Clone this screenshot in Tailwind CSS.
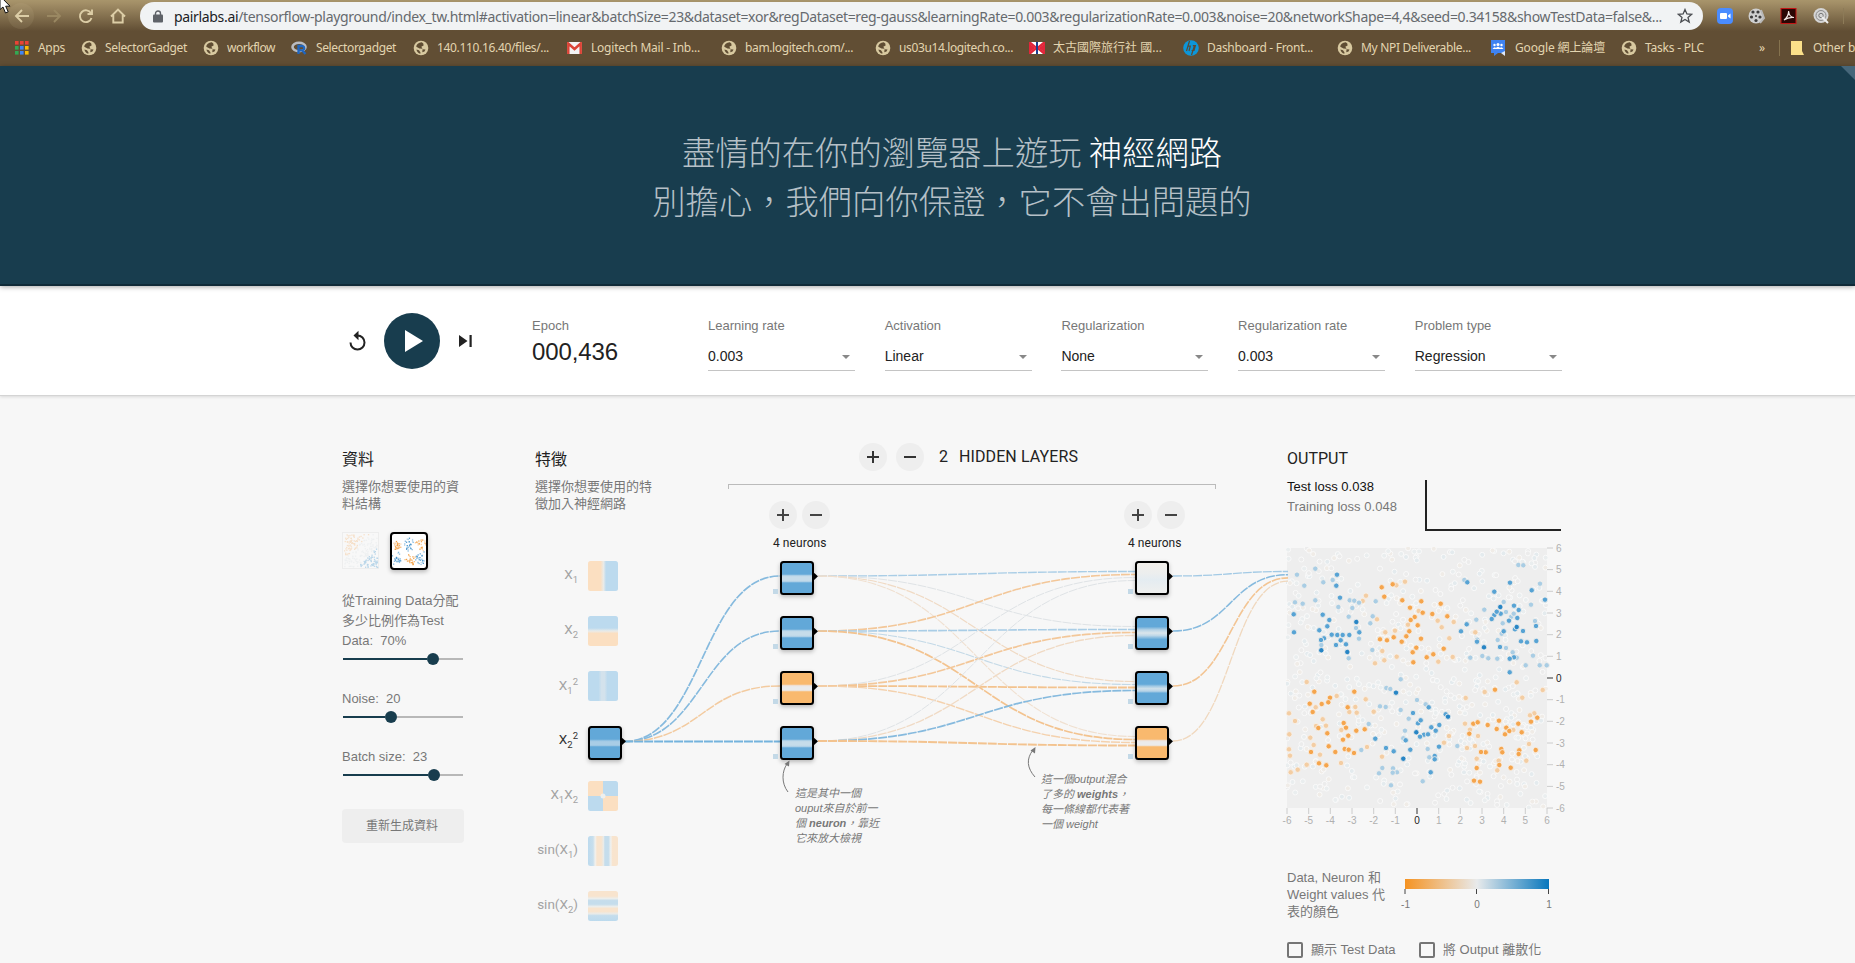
<!DOCTYPE html>
<html lang="zh-Hant">
<head>
<meta charset="utf-8">
<title>Neural network playground</title>
<script src="https://cdn.jsdelivr.net/npm/@tailwindcss/browser@4"></script>
</head>
<body class="w-[1855px] h-[963px] overflow-hidden bg-[#f7f7f7] font-['Liberation_Sans','Noto_Sans_CJK_TC',sans-serif] text-[13px] text-[#777]">

<svg class="hidden">
  <symbol id="globe" viewBox="0 0 16 16"><circle cx="8" cy="8" r="7.3" fill="#d8c9a0"/><path d="M8.8 2.2C5.5 2.300 3.200 4.500 3.300 6.700L6.500 8.600L9.500 8.800L8.300 6.800L10.600 5.400L10.300 3.500ZM3.400 9.500L6 10.300L7.500 12.500L7.300 13.800C5.300 13.300 3.800 11.800 3.400 9.500ZM9.500 9.300L12.500 9.500L11.500 11.500L9.300 12.200Z" fill="#5f4d33"/></symbol>
</svg>

<!-- Browser toolbar -->
<div class="h-[66px] bg-[linear-gradient(#a8956b_0px,#a38f67_3px,#614e34_31px,#614e34_100%)] relative font-['Noto_Sans','Noto_Sans_CJK_TC',sans-serif]">
  <div class="h-8 flex items-center">
    <svg class="w-[140px] h-8 shrink-0" viewBox="0 0 140 32" fill="none" stroke="#dccda6" stroke-width="1.900">
      <circle cx="21" cy="16" r="13" fill="#cbbb93" fill-opacity=".13" stroke="none"/>
      <path d="M29 16H16.500M22 10L16 16L22 22"/>
      <path d="M47 16H59.500M54 10L60 16L54 22" stroke="#9a8862"/>
      <path d="M91 13.300A5.900 5.900 0 1 0 91.500 18M92 9.500V14H87.500"/>
      <path d="M111 16.500L118 9.500L125 16.500M113.300 15V22.500H122.700V15"/>
      <path d="M0 -4V9.500L3 7L5.500 13L8.200 11.800L5.700 6.200H10L0 -4Z" fill="#fff" stroke="#111" stroke-width="1"/>
    </svg>
    <div class="w-[1563px] h-7 rounded-full bg-[#f1f3f4] flex items-center shrink-0">
      <svg class="ml-[13px] mr-[11px] w-[10px] h-[13px]" viewBox="0 0 10 13"><rect x="0" y="4.500" width="10" height="8" rx="1" fill="#5f6368"/><path d="M2.500 5V3.500a2.500 2.500 0 0 1 5 0V5" fill="none" stroke="#5f6368" stroke-width="1.400"/></svg>
      <span data-w="1488" class="text-[14px] whitespace-nowrap text-[#666a6e]"><span class="text-[#202124]">pairlabs.ai</span>/tensorflow-playground/index_tw.html#activation=linear&amp;batchSize=23&amp;dataset=xor&amp;regDataset=reg-gauss&amp;learningRate=0.003&amp;regularizationRate=0.003&amp;noise=20&amp;networkShape=4,4&amp;seed=0.34158&amp;showTestData=false&amp;...</span>
      <svg class="ml-auto mr-[10px] w-4 h-4" viewBox="0 0 16 16" fill="none" stroke="#4a4d51" stroke-width="1.300"><path d="M8 1.500L9.900 6L14.700 6.300L11 9.400L12.200 14.100L8 11.500L3.800 14.100L5 9.400L1.300 6.300L6.100 6Z"/></svg>
    </div>
    <svg class="w-[152px] h-8 shrink-0" viewBox="1703 0 152 32">
      <rect x="1717" y="8" width="16" height="16" rx="4" fill="#4a8cff"/><rect x="1720" y="13" width="7" height="6" rx="1" fill="#fff"/><path d="M1728 15.500L1730.500 13.500V18.500L1728 16.500Z" fill="#fff"/>
      <circle cx="1756" cy="16" r="7.500" fill="#cfcfcf"/><path d="M1761 10L1764 18L1760 23" stroke="#b8b8b8" stroke-width="2" fill="none"/><g fill="#3d3d3d"><circle cx="1753" cy="12" r="1.600"/><circle cx="1758" cy="12" r="1.600"/><circle cx="1751.500" cy="17" r="1.600"/><circle cx="1756" cy="20.500" r="1.600"/><circle cx="1760" cy="17" r="1.600"/><circle cx="1756" cy="16" r="1.100"/></g>
      <rect x="1781" y="8.500" width="15" height="15" fill="#2a0604" stroke="#c11414"/><path d="M1784 20C1787 18 1789 14 1788.500 11C1789 15 1791 17.500 1794 17.500C1790 17 1787 18 1784 20" fill="none" stroke="#f2e6e4" stroke-width="1.200"/>
      <circle cx="1821" cy="15.500" r="7.500" fill="#d5d5d5"/><circle cx="1821" cy="15.500" r="5" fill="none" stroke="#8a8a8a"/><circle cx="1821" cy="15.500" r="2.200" fill="none" stroke="#777"/><path d="M1822 17L1828 23" stroke="#eee" stroke-width="2"/>
      <path d="M1843.500 8V24" stroke="#8d7b58"/>
    </svg>
  </div>
  <div id="bookmarks" class="h-[32px] relative flex items-center text-[12px] text-[#e3d5b0] whitespace-nowrap"></div>
</div>

<!-- Page header -->
<header class="relative z-10 h-[220px] bg-[#183d4e] border-b-2 border-[#102b38] shadow-[0_1px_5px_rgba(0,0,0,.35)] flex flex-col pt-[60px] pl-[49px]">
  <h1 class="text-center font-light text-[33.300px] leading-[49px] text-[#b5c0c7] font-['Noto_Sans_CJK_TC',sans-serif]">盡情的在你的瀏覽器上遊玩 <span class="text-white">神經網路</span><br>別擔心，我們向你保證，它不會出問題的</h1>
  <svg class="absolute right-0 top-0 w-[14px] h-[14px]" viewBox="0 0 14 14"><path d="M0 0H14V14Z" fill="#46677a"/></svg>
</header>

<!-- Training controls -->
<section class="h-[110px] bg-white border-b border-[#d4d4d4] shadow-[0_1px_3px_rgba(0,0,0,.12)] flex">
  <div class="pl-[349px] w-[532px] flex items-center shrink-0">
    <svg class="w-[17px] h-[22px]" viewBox="0 0 17 22" fill="none" stroke="#222" stroke-width="2"><path d="M8.500 5.500A7 7 0 1 1 1.500 12.500"/><path d="M9.500 0.800V10.200L4.500 5.500Z" fill="#222" stroke="none"/></svg>
    <div class="ml-[18px] w-14 h-14 rounded-full bg-[#183d4e] flex items-center justify-center"><svg class="w-[18px] h-[22px] ml-1" viewBox="0 0 18 22"><path d="M0 0L18 11L0 22Z" fill="#fff"/></svg></div>
    <svg class="ml-[19px] w-[13px] h-3" viewBox="0 0 13 12" fill="#222"><path d="M0 0L8.500 6L0 12ZM10.500 0H12.700V12H10.500Z"/></svg>
  </div>
  <div class="w-[176px] shrink-0 pt-[32px]"><div class="leading-4">Epoch</div><div class="mt-[2px] text-[24px] leading-8 text-[#222] whitespace-nowrap"><span data-w="86">000,436</span></div></div>
  <div id="selects" class="flex gap-[29.700px] pt-[32px]"></div>
</section>

<!-- Playground -->
<main class="relative h-[567px] flex">
  <div class="ml-[342px] w-[193px] shrink-0 pt-[52px]">
    <h2 class="text-[16px] leading-6 text-[#222]">資料</h2>
    <p class="w-[120px] mt-[6px] leading-[17px]">選擇你想要使用的資料結構</p>
    <div class="flex mt-[20px] h-[38px] gap-[11px]">
      <svg id="thumbA" class="w-[37px] h-[37px] opacity-35" viewBox="0 0 37 37"></svg>
      <svg id="thumbB" class="w-[38px] h-[38px] rounded bg-white border-2 border-black shadow-[0_2px_4px_rgba(0,0,0,.25)]" viewBox="0 0 34 34"></svg>
    </div>
    <p class="w-[122px] mt-[21px] leading-5 whitespace-nowrap">從Training Data分配<br>多少比例作為Test<br>Data:&nbsp; 70%</p>
    <div class="ml-px w-[120px] h-3 mt-[2px] flex items-center"><div class="w-[84px] h-[2px] bg-[#183d4e]"></div><div class="size-3 rounded-full bg-[#183d4e]"></div><div class="flex-1 h-[2px] bg-[#b8b8b8]"></div></div>
    <p class="mt-[24px] leading-5">Noise:&nbsp; 20</p>
    <div class="ml-px w-[120px] h-3 mt-[2px] flex items-center"><div class="w-[42px] h-[2px] bg-[#183d4e]"></div><div class="size-3 rounded-full bg-[#183d4e]"></div><div class="flex-1 h-[2px] bg-[#b8b8b8]"></div></div>
    <p class="mt-[24px] leading-5">Batch size:&nbsp; 23</p>
    <div class="ml-px w-[120px] h-3 mt-[2px] flex items-center"><div class="w-[85px] h-[2px] bg-[#183d4e]"></div><div class="size-3 rounded-full bg-[#183d4e]"></div><div class="flex-1 h-[2px] bg-[#b8b8b8]"></div></div>
    <div class="mt-[28px] w-[122px] h-[34px] rounded-sm bg-[#eee] text-[12px] flex items-center justify-center pr-0.5">重新生成資料</div>
  </div>
  <div class="w-[193px] shrink-0 pt-[52px]">
    <h2 class="text-[16px] leading-6 text-[#222]">特徵</h2>
    <p class="w-[120px] mt-[6px] leading-[17px]">選擇你想要使用的特徵加入神經網路</p>
  </div>
  <div class="w-[559px] shrink-0 pt-[47px] font-['Roboto','Noto_Sans_CJK_TC',sans-serif] text-[#222]">
    <div class="flex items-center pl-[131px] h-7">
      <svg class="w-[65px] h-7" viewBox="0 0 65 28"><circle cx="14" cy="14" r="14" fill="#eee"/><circle cx="51" cy="14" r="14" fill="#eee"/><path d="M8 14H20M14 8V20M45 14H57" stroke="#333" stroke-width="2"/></svg>
      <span class="ml-[15px] text-[16px]">2</span><span data-w="119" class="ml-[11px] text-[16px] whitespace-nowrap">HIDDEN LAYERS</span>
    </div>
    <div class="w-[488px] h-[5px] mt-[13px] border border-b-0 border-[#bbb]"></div>
    <div class="flex pl-[41px] mt-[12px] gap-[292px]">
      <div class="w-[63px]"><svg class="w-[62px] h-7" viewBox="0 0 62 28"><circle cx="14" cy="14" r="14" fill="#eee"/><circle cx="47" cy="14" r="14" fill="#eee"/><path d="M8 14H20M14 8V20M41 14H53" stroke="#444" stroke-width="2"/></svg><div class="pl-1 mt-[6px] text-[12px] leading-4 whitespace-nowrap"><span data-w="53.5">4 neurons</span></div></div>
      <div class="w-[63px]"><svg class="w-[62px] h-7" viewBox="0 0 62 28"><circle cx="14" cy="14" r="14" fill="#eee"/><circle cx="47" cy="14" r="14" fill="#eee"/><path d="M8 14H20M14 8V20M41 14H53" stroke="#444" stroke-width="2"/></svg><div class="pl-1 mt-[6px] text-[12px] leading-4 whitespace-nowrap"><span data-w="53.5">4 neurons</span></div></div>
    </div>
  </div>
  <div class="w-[300px] shrink-0 pt-[51px]">
    <div class="flex">
      <div class="w-[137px] shrink-0 whitespace-nowrap">
        <h2 class="text-[16px] leading-6 text-[#222] font-['Roboto',sans-serif]"><span data-w="61">OUTPUT</span></h2>
        <p class="mt-[6px] leading-5 text-[#111]"><span data-w="87">Test loss 0.038</span></p>
        <p class="leading-5"><span data-w="110">Training loss 0.048</span></p>
      </div>
      <svg class="w-[140px] h-[54px] mt-[33px]" viewBox="0 0 140 54"><path d="M2 0V50H137" fill="none" stroke="#222" stroke-width="2"/></svg>
    </div>
    <svg id="heat" class="w-[310px] h-[294px] -ml-[10px] mt-[7px]" viewBox="1277 541 310 294"></svg>
    <div class="flex mt-[34px]">
      <p class="w-[110px] leading-[17px] whitespace-nowrap">Data, Neuron 和<br>Weight values 代<br>表的顏色</p>
      <svg class="w-[160px] h-[40px] mt-[9px]" viewBox="1397 878 160 40">
        <defs><linearGradient id="lg"><stop offset="0" stop-color="#f59322"/><stop offset=".5" stop-color="#e8eaeb"/><stop offset="1" stop-color="#0877bd"/></linearGradient></defs>
        <rect x="1405" y="879" width="144" height="10" fill="url(#lg)"/>
        <path d="M1405 889V894M1476.500 889V894M1548.500 889V894" stroke="#444" stroke-width="1"/>
        <g font-size="10" fill="#777" text-anchor="middle"><text x="1405.500" y="908">-1</text><text x="1477" y="908">0</text><text x="1549" y="908">1</text></g>
      </svg>
    </div>
    <div class="flex mt-[20px] items-center h-5 whitespace-nowrap">
      <span class="size-4 border-2 border-[#757575] rounded-[2px]"></span><span class="ml-2 w-[108px]">顯示 Test Data</span>
      <span class="size-4 border-2 border-[#757575] rounded-[2px]"></span><span class="ml-2">將 Output 離散化</span>
    </div>
  </div>

  <!-- Network diagram canvas -->
  <svg id="net" class="absolute left-0 top-0 w-[1290px] h-[567px] pointer-events-none" viewBox="0 396 1290 567"></svg>
  <p class="absolute left-[795px] top-[390px] italic text-[11px] leading-[15px] whitespace-nowrap">這是其中一個<br>ouput來自於前一<br>個 <b>neuron</b>，靠近<br>它來放大檢視</p>
  <p class="absolute left-[1041px] top-[376px] italic text-[11px] leading-[15px] whitespace-nowrap">這一個output混合<br>了多的 <b>weights</b>，<br>每一條線都代表著<br>一個 weight</p>
</main>

<script>
const $ = id => document.getElementById(id);
// Bookmarks: icon kind, icon x, label x, label end, label
const G = '<svg width="16" height="16"><use href="#globe"/></svg>';
const icons = {
 g: G,
 apps: '<svg width="14" height="14" viewBox="0 0 14 14">' + ['#ea4335','#ea4335','#ea4335','#34a853','#4285f4','#fbbc05','#34a853','#4285f4','#fbbc05'].map((c,i)=>`<rect x="${i%3*5}" y="${Math.floor(i/3)*5}" width="3.600" height="3.600" fill="${c}"/>`).join('') + '</svg>',
 r: '<svg width="17" height="14" viewBox="0 0 17 14"><ellipse cx="8" cy="6" rx="6.500" ry="4.300" fill="none" stroke="#b9bcc2" stroke-width="2.600"/><path d="M7.500 13V5H11.500A2.200 2.200 0 0 1 11.500 9.300H8M11 9.300L14.500 13" fill="none" stroke="#1f66c0" stroke-width="2.300"/></svg>',
 m: '<svg width="15" height="12" viewBox="0 0 15 12"><rect width="15" height="12" rx="1" fill="#f4f4f4"/><path d="M1.300 12V1.500L7.500 7L13.700 1.500V12" fill="none" stroke="#dc4437" stroke-width="2.500"/></svg>',
 f: '<svg width="16" height="12" viewBox="0 0 16 12"><rect width="16" height="12" fill="#fff"/><path d="M0 1.500V10.500L6.500 6ZM16 1.500V10.500L9.500 6Z" fill="#e2263a"/><path d="M0 0H2L8 5L14 0H16V2L10 6L16 10V12H14L8 7L2 12H0V10L6 6L0 2Z" fill="#e2263a"/><path d="M8 0V12" stroke="#1d3f8f" stroke-width="2"/></svg>',
 hp: '<svg width="16" height="16" viewBox="0 0 16 16"><circle cx="8" cy="8" r="7.800" fill="#0d96d8"/><path d="M6.500 1L3.500 11M5.200 6.200H7.300L6 11M11.500 5.500L8.500 15M9.800 5.700H12.400L11 10.500H8.600" fill="none" stroke="#5a4a34" stroke-width="1.200"/></svg>',
 gg: '<svg width="14" height="16" viewBox="0 0 14 16"><path d="M0 0H14V13H7L3 16V13H0Z" fill="#3f83f2"/><path d="M14 11V16L10 13Z" fill="#dfe9fb"/><g fill="#fff"><circle cx="7" cy="4.500" r="1.500"/><circle cx="3.500" cy="5" r="1.200"/><circle cx="10.500" cy="5" r="1.200"/><path d="M1.500 9Q3.500 6 5 8Q7 5.500 9 8Q10.500 6 12.500 9Z"/></g></svg>',
 fold: '<svg width="13" height="14" viewBox="0 0 13 14"><path d="M0 0H11V10L13 14H0Z" fill="#fbe08a"/></svg>'
};
let cur = 0, h = '';
[['apps',15,38,65,'Apps'],['g',81,105,187,'SelectorGadget'],['g',203,227,275,'workflow'],['r',291,316,396,'Selectorgadget'],['g',413,437,549,'140.110.16.40/files/...'],['m',567,591,700,'Logitech Mail - Inb...'],['g',721,745,853,'bam.logitech.com/...'],['g',875,899,1013,'us03u14.logitech.co...'],['f',1029,1053,1162,'太古國際旅行社 國...'],['hp',1183,1207,1313,'Dashboard - Front...'],['g',1337,1361,1471,'My NPI Deliverable...'],['gg',1491,1515,1605,'Google 網上論壇'],['g',1621,1645,1704,'Tasks - PLC'],['',1758,1759,1769,'»'],['fold',1791,1813,1910,'Other bookmarks']].forEach(b=>{
  h += `<span class="flex items-center shrink-0" style="margin-left:${b[1]-cur}px"><span class="flex shrink-0" style="width:${b[2]-b[1]}px">${icons[b[0]]||''}</span><span class="block shrink-0" style="width:${b[3]-b[2]}px"><span data-w="${b[3]-b[2]}">${b[4]}</span></span></span>`;
  cur = b[3];
});
$('bookmarks').innerHTML = '<span class="absolute left-[1779px] top-2 w-px h-4 bg-[#85734f]"></span>' + h;

$('selects').innerHTML = [['Learning rate','0.003'],['Activation','Linear'],['Regularization','None'],['Regularization rate','0.003'],['Problem type','Regression']].map(s=>`<div class="w-[147px]"><div class="leading-4">${s[0]}</div><div class="mt-[12px] h-[25px] border-b border-[#c4c4c4] flex justify-between text-[14px] leading-[21px] text-[#222]"><span>${s[1]}</span><svg class="w-2 h-1 mt-[9px] mr-[5px]" viewBox="0 0 8 4"><path d="M0 0H8L4 4Z" fill="#888"/></svg></div></div>`).join('');

// Network
let s = '<defs>';
const grad=(id,stops,hz)=>`<linearGradient id="${id}" x2="${hz?1:0}" y2="${hz?0:1}">${stops.map(t=>`<stop offset="${t[0]}" stop-color="${t[1]}"/>`).join('')}</linearGradient>`;
const lb='#bcdaee', lo='#fbdfc1', B='#62a8d8', O='#f9b96e';
s += grad('x1',[[0,lo],[.42,lo],[.52,'#e9ebe9'],[.6,lb],[1,lb]],1)+grad('x2',[[0,lb],[.4,lb],[.5,'#e9ebe9'],[.58,lo],[1,lo]])
 + grad('x11',[[0,lb],[.35,lb],[.45,'#d3e2ec'],[.55,'#d3e2ec'],[.65,lb],[1,lb]],1)
 + grad('s1',[[0,lb],[.17,'#c8dfed'],[.24,'#f1f1ee'],[.3,'#f8e4ce'],[.44,'#f8e4ce'],[.52,'#e9ebe9'],[.56,'#c5ddec'],[.68,'#c5ddec'],[.76,'#f1f1ee'],[.82,'#f8e4ce'],[1,'#f8e4ce']],1)
 + grad('s2',[[0,'#f8e4ce'],[.17,'#f8e4ce'],[.25,'#eceeec'],[.32,'#c5ddec'],[.44,'#c5ddec'],[.52,'#eceeec'],[.58,'#f8e4ce'],[.68,'#f8e4ce'],[.76,'#e9ebe9'],[.82,'#c5ddec'],[1,lb]])
 + grad('nb',[[0,B],[.38,B],[.42,'#a9cde6'],[.46,'#c6dcea'],[.57,'#c6dcea'],[.62,'#a9cde6'],[.65,B],[1,B]])
 + grad('nx',[[0,B],[.38,B],[.42,'#8fc0e2'],[.46,'#a9cde6'],[.57,'#a9cde6'],[.62,B],[1,B]])
 + grad('no',[[0,O],[.38,O],[.42,'#f0ded0'],[.46,'#ebebec'],[.57,'#ebebec'],[.62,O],[1,O]])
 + grad('nb2',[[0,B],[.3,B],[.4,'#b4d2e6'],[.5,'#dbe5eb'],[.58,'#bed7e8'],[.7,B],[1,B]])
 + grad('nb3',[[0,B],[.38,B],[.44,'#9fc8e3'],[.52,'#cfe0ea'],[.6,'#b4d2e6'],[.66,B],[1,B]])
 + grad('nw',[[0,'#f2efea'],[.35,'#eceeee'],[.55,'#e4ecf1'],[1,'#f0f0ee']])
 + '<filter id="sh" x="-30%" y="-30%" width="160%" height="170%"><feDropShadow dx="0" dy="2" stdDeviation="2" flood-opacity=".25"/></filter></defs>';
const link=(x0,y0,x1,y1,c,w)=>{const m=(x0+x1)/2; s+=`<path d="M${x0} ${y0}C${m} ${y0} ${m} ${y1} ${x1} ${y1}" fill="none" stroke="${c}" stroke-width="${w}" stroke-dasharray="9 1"/>`;};
const Y=[576,631,686,741], cb='#86bade', co='#f3c38f', cg='#dfe3e6', clo='#f0dac4';
link(624,741.5,780,576,cb,1.7);link(624,741.5,780,631,cb,1.6);link(624,741.5,780,686,'#f3cba0',1.5);link(624,741.5,780,741.5,'#74b3dd',2);
[[['#a9cde6',1.4],[cg,1],[clo,1.2],['#f0e0d0',1.1]],[['#f3c799',1.6],['#a9cde6',1.6],['#c3d9e7',1.1],[co,1.7]],[[cg,1],['#f3c799',1.7],[co,1.8],['#f4d1ad',1.4]],[[cg,1],[clo,1.3],[cb,1.7],[co,1.9]]].forEach((r,i)=>r.forEach((l,j)=>link(818,Y[i],1135,Y[j]-4.5+i*3,l[0],l[1])));
[['#a3cae5',1.3],[cb,1.5],['#f3c594',1.6],['#f0d8be',1.3]].forEach((l,i)=>link(1173,Y[i],1288,571.5+i*3.2,l[0],l[1]));
const node=(x,y,f)=>{s+=`<rect x="${x+1}" y="${y+1}" width="32" height="32" rx="2.500" fill="url(#${f})" stroke="#000" stroke-width="2" filter="url(#sh)"/><path d="M${x+33} ${y+11}L${x+38} ${y+15.300}L${x+33} ${y+20}Z"/>`;};
const bias=(x,y)=>{s+=`<rect x="${x-7}" y="${y+28}" width="5" height="5" fill="#c3d9e7"/>`;};
['nb','nb','no','nb'].forEach((f,i)=>{node(780,561+55*i,f);bias(780,561+55*i);});
['nw','nb2','nb3','no'].forEach((f,i)=>{node(1135,561+55*i,f);bias(1135,561+55*i);});
[['x1',561],['x2',616],['x11',671],['s1',836],['s2',891]].forEach(f=>s+=`<rect x="588" y="${f[1]}" width="30" height="30" rx="2.500" fill="url(#${f[0]})"/>`);
s+=`<clipPath id="q"><rect x="588" y="781" width="30" height="30" rx="2.500"/></clipPath><g clip-path="url(#q)"><rect x="588" y="781" width="15" height="15" fill="${lo}"/><rect x="603" y="781" width="15" height="15" fill="${lb}"/><rect x="588" y="796" width="15" height="15" fill="${lb}"/><rect x="603" y="796" width="15" height="15" fill="${lo}"/><circle cx="603" cy="796" r="2.500" fill="#eef0ee"/></g>`;
node(588,726,'nx');
const T=(y,a,c='#a3a3a3')=>{s+=`<text x="578" y="${y}" text-anchor="end" font-family="Roboto" font-size="13.500" fill="${c}">${a}</text>`;};
const sub=n=>`<tspan dy="4" font-size="9.500">${n}</tspan>`, sup='<tspan dy="-9" font-size="9.500">2</tspan>';
T(579,'X'+sub(1));T(634,'X'+sub(2));T(690,'X'+sub(1)+sup);
T(744,'X'+sub(2)+sup,'#333');
T(799,'X'+sub(1)+'<tspan dy="-4">X</tspan>'+sub(2));
T(854,'sin(X'+sub(1)+'<tspan dy="-4">)</tspan>');T(909,'sin(X'+sub(2)+'<tspan dy="-4">)</tspan>');
s+=`<g fill="none" stroke="#777" stroke-width="1"><path d="M788 792C781 783 782 771 787 764"/><path d="M1035 777C1027 768 1026 759 1033 750"/></g><path d="M789.500 760.500L784.500 764L789 766.500ZM1035.500 747L1030.500 750.500L1035 753.500Z" fill="#777"/>`;
$('net').innerHTML=s;

// Output plot
const pts = {
 o2:[[335,472],[368,463],[343,500],[397,511],[454,514],[512,521],[420,533],[458,548],[487,552],[532,559],[434,561],[422,570],[443,586],[418,604],[409,619],[453,626],[330,628],[351,631],[371,622],[395,635],[439,653],[428,667],[430,697],[490,673],[470,682],[521,656],[133,785],[180,803],[155,822],[175,817],[119,821],[233,832],[128,846],[253,785],[221,879],[228,893],[145,894],[172,910],[259,902],[284,898],[219,929],[235,917],[176,949],[123,966],[196,966],[224,957],[236,959],[252,969],[147,1000],[169,1006],[610,881],[623,877],[653,885],[687,872],[680,897],[709,893],[705,913],[745,881],[755,907],[783,875],[718,903],[797,960],[748,961],[694,957],[647,967],[633,966],[688,1005],[722,1013],[612,1052],[630,1055],[598,911],[620,1014],[675,779],[802,863],[746,972],[697,967]],
 o1:[[405,455],[379,466],[288,497],[278,513],[551,576],[515,592],[321,568],[346,607],[375,602],[315,700],[343,691],[337,663],[380,680],[548,681],[538,625],[505,695],[503,572],[446,543],[414,584],[616,607],[110,756],[200,798],[137,832],[158,868],[168,887],[138,888],[238,846],[256,831],[260,848],[287,808],[311,845],[214,900],[131,945],[121,923],[150,974],[58,913],[57,958],[60,977],[83,1019],[110,1004],[291,951],[213,999],[62,1027],[336,980],[587,804],[585,881],[600,899],[624,918],[615,948],[591,954],[620,986],[686,992],[682,1021],[730,900],[777,942],[769,992],[793,850],[780,856],[644,786],[522,938],[537,918],[740,757],[757,803],[818,780],[75,873],[57,850]],
 b3:[[259,576],[154,661],[232,666],[691,531],[740,591],[642,652],[378,788],[534,860],[439,907],[400,986]],
 b2:[[201,434],[210,503],[199,467],[158,554],[178,570],[172,589],[148,601],[162,625],[153,630],[185,614],[202,615],[218,615],[238,615],[212,631],[228,643],[198,645],[268,607],[72,607],[71,553],[592,457],[720,458],[673,485],[785,481],[825,509],[732,527],[746,540],[742,564],[692,551],[673,555],[665,567],[717,572],[680,545],[798,588],[759,603],[701,604],[735,598],[753,634],[771,637],[799,633],[690,651],[732,682],[719,686],[719,727],[573,604],[590,583],[621,635],[476,832],[527,853],[429,849],[444,880],[452,871],[484,892],[497,902],[462,914],[474,913],[450,920],[407,931],[316,926],[348,954],[371,964],[421,959],[507,950],[494,978],[494,988],[508,885],[482,1027]],
 b1:[[136,416],[103,467],[160,457],[188,450],[81,434],[75,517],[98,521],[136,511],[205,531],[239,511],[253,512],[267,518],[247,534],[317,514],[236,560],[258,594],[267,626],[301,580],[308,559],[154,645],[236,685],[307,660],[392,748],[349,774],[361,777],[330,829],[347,831],[392,840],[416,866],[441,810],[467,823],[405,902],[400,925],[296,882],[337,1014],[369,1015],[381,1027],[368,1028],[327,1030],[458,1054],[363,1066],[274,960],[473,957],[478,982],[583,450],[745,405],[760,406],[810,461],[783,524],[701,516],[708,546],[643,539],[619,569],[698,580],[724,560],[731,551],[795,573],[695,611],[622,629],[683,630],[637,678],[655,685],[682,686],[601,683],[708,654],[728,667],[789,677],[740,683],[767,706],[809,706],[830,706],[562,948]]
};
let seed=7; const rnd=()=>(seed=(seed*16807)%2147483647)/2147483647;
let p='<rect x="1287" y="548" width="260" height="260" fill="#eee"/><clipPath id="c"><rect x="1286" y="547" width="262" height="262"/></clipPath><g clip-path="url(#c)">';
for(let i=0;i<620;i++) p+=`<circle cx="${(1287+rnd()*260).toFixed(1)}" cy="${(548+rnd()*260).toFixed(1)}" r="2.500" fill="${['#ececec','#eaeeef','#e4ebee','#f0ece7'][i%4]}" stroke="#fafafa" stroke-width="1"/>`;
p+='</g>';
const col={o2:'#f5a54d',o1:'#f3cda3',b1:'#a9cde4',b2:'#57a3d4',b3:'#2785c5'};
for(const k of ['o1','b1','o2','b2','b3']) pts[k].forEach(q=>p+=`<circle cx="${(1270+q[0]/3).toFixed(1)}" cy="${(430+q[1]/3).toFixed(1)}" r="2.700" fill="${col[k]}" stroke="#f7f3ee" stroke-width=".8"/>`);
for(let i=-6;i<=6;i++){const x=1417+i*21.67,y=678-i*21.67,c=i?'#b0b0b0':'#222',k=i?'#ccc':'#333';
 p+=`<path d="M${x.toFixed(1)} 808V814M1547 ${y.toFixed(1)}H1553" stroke="${k}"/><text x="${x.toFixed(1)}" y="824" text-anchor="middle" font-size="10" fill="${c}">${i}</text><text x="1556" y="${(y+3.5).toFixed(1)}" font-size="10" fill="${c}">${i}</text>`;}
$('heat').innerHTML=p;

// Dataset thumbnails
let a='<rect x=".5" y=".5" width="36" height="36" fill="#fafafa" stroke="#ddd"/>';
for(let i=0;i<260;i++){const x=2+rnd()*33,y=2+rnd()*33,t=x+y-37; if(Math.abs(t)<3&&i%2)continue; a+=`<rect x="${x.toFixed(1)}" y="${y.toFixed(1)}" width="1.300" height="1.300" fill="${t>12?'#4a9bd0':t<-8?'#f5b878':'#dfe5e8'}"/>`;}
$('thumbA').innerHTML=a;
let t='';
[[5,10,1],[17,10,0],[28,10,1],[5,25,0],[17,25,1],[28,25,0]].forEach(c=>{for(let i=0;i<26;i++){const x=c[0]+(rnd()+rnd()-1)*6,y=c[1]+(rnd()+rnd()-1)*8;t+=`<rect x="${x.toFixed(1)}" y="${y.toFixed(1)}" width="1.300" height="1.300" opacity="${(.3+rnd()*.7).toFixed(2)}" fill="${c[2]?'#f39c3c':'#3d8fca'}"/>`;}});
$('thumbB').innerHTML=t;

// Fit labels to their column widths through letter spacing, once styles and fonts are in place
const fit = () => document.querySelectorAll('[data-w]').forEach(e=>{
  e.style.letterSpacing='0px';
  const w=e.getBoundingClientRect().width, n=e.textContent.length;
  e.style.letterSpacing=Math.max(-.8,Math.min(.8,(+e.dataset.w-w)/n))+'px';
});
window.addEventListener('load',()=>{fit();document.fonts.ready.then(fit);setTimeout(fit,50);});
</script>
</body>
</html>
